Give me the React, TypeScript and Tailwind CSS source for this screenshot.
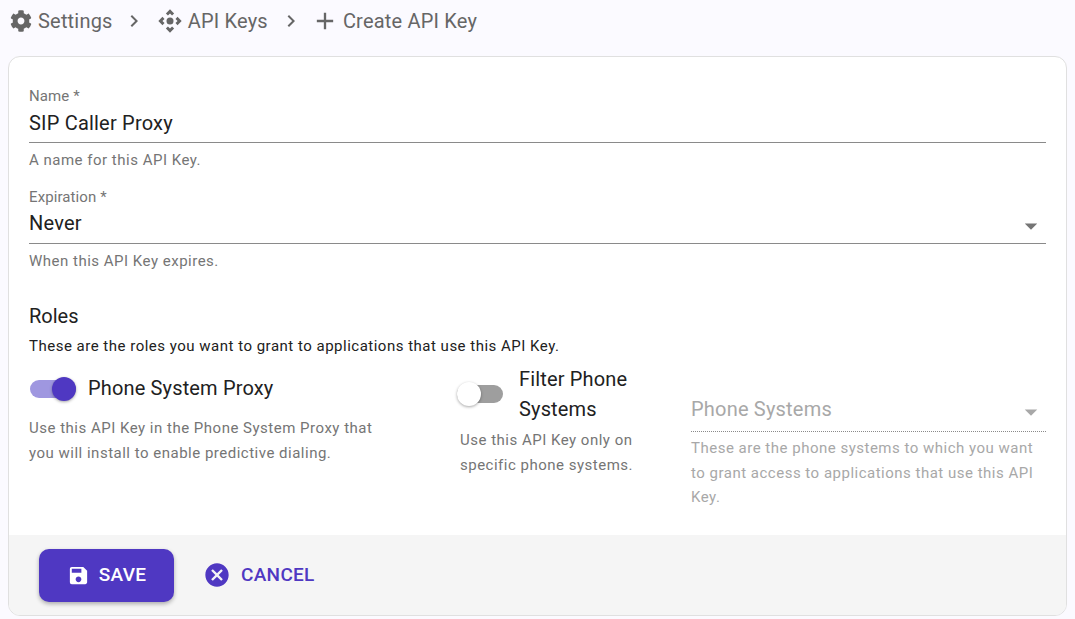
import { FaCog } from "react-icons/fa";
import { MdControlCamera, MdAdd, MdChevronRight, MdArrowDropDown, MdSave, MdCancel } from "react-icons/md";

const font = { fontFamily: "Roboto, sans-serif" };

function Crumb({ icon, label }: { icon: React.ReactNode; label: string }) {
  return (
    <div className="flex items-center gap-[4px] text-[20px] tracking-[0.2px] text-[#666666]">
      {icon}
      <span>{label}</span>
    </div>
  );
}

function Switch({ on }: { on: boolean }) {
  return (
    <div className="relative h-[18px] w-[46px] shrink-0">
      <div className={`h-[18px] w-[46px] rounded-full ${on ? "bg-[#9f97e0]" : "bg-[#9e9e9e]"}`} />
      <div
        className={`absolute top-[-3px] h-[24px] w-[24px] rounded-full shadow-[0_1px_3px_rgba(0,0,0,0.35)] ${
          on ? "right-0 bg-[#4f38c2]" : "left-0 bg-white"
        }`}
      />
    </div>
  );
}

export default function App() {
  return (
    <div className="h-[619px] w-[1075px] overflow-hidden bg-[#fbfaff]" style={font}>
      <div className="flex h-[42px] items-center pl-[10px]">
        <Crumb icon={<FaCog className="mr-[2px] h-[22px] w-[22px] text-[#666666]" />} label="Settings" />
        <MdChevronRight className="ml-[9px] mr-[10px] h-[24px] w-[24px] text-[#666666]" />
        <Crumb icon={<MdControlCamera className="h-[28px] w-[28px] text-[#666666]" />} label="API Keys" />
        <MdChevronRight className="ml-[11px] mr-[8px] h-[24px] w-[24px] text-[#666666]" />
        <Crumb icon={<MdAdd className="h-[28px] w-[28px] text-[#666666]" />} label="Create API Key" />
      </div>

      <div className="mx-[8px] mt-[14px] flex h-[560px] w-[1059px] flex-col overflow-hidden rounded-[12px] border border-[#e0e0e0] bg-white">
        <div className="flex-1 px-[20px] pt-[30px]">
          <div className="text-[15px] leading-[18px] tracking-[0.1px] text-[#757575]">Name *</div>
          <div className="flex h-[38px] items-center border-b border-[#8a8a8a] pb-[2px] text-[20px] tracking-[0.2px] text-[#212121]">
            SIP Caller Proxy
          </div>
          <div className="mt-[7px] text-[15px] leading-[20px] tracking-[0.5px] text-[#757575]">A name for this API Key.</div>

          <div className="mt-[18px] text-[15px] leading-[18px] tracking-[0.1px] text-[#757575]">Expiration *</div>
          <div className="flex h-[38px] items-center justify-between border-b border-[#8a8a8a] pb-[4px] text-[20px] tracking-[0.2px] text-[#212121]">
            <span>Never</span>
            <MdArrowDropDown className="mt-[7px] h-[30px] w-[30px] text-[#757575]" />
          </div>
          <div className="mt-[7px] text-[15px] leading-[20px] tracking-[0.5px] text-[#757575]">When this API Key expires.</div>

          <div className="mt-[31px] text-[20px] leading-[28px] text-[#212121]">Roles</div>
          <div className="mt-[6px] text-[15px] leading-[20px] tracking-[0.5px] text-[#212121]">
            These are the roles you want to grant to applications that use this API Key.
          </div>

          <div className="mt-[7px] flex">
            <div className="w-[428px] shrink-0">
              <div className="flex h-[50px] items-center gap-[12px]">
                <div className="mt-[2px] pl-px"><Switch on /></div>
                <span className="text-[20px] tracking-[0.15px] text-[#212121]">Phone System Proxy</span>
              </div>
              <div className="mt-[3px] w-[350px] text-[15px] leading-[25px] tracking-[0.5px] text-[#757575]">
                Use this API Key in the Phone System Proxy that you will install to enable predictive dialing.
              </div>
            </div>
            <div className="w-[234px] shrink-0">
              <div className="flex h-[60px] items-center gap-[15px] pt-[1px]">
                <div className="w-[47px] shrink-0"><Switch on={false} /></div>
                <span className="w-[120px] text-[20px] leading-[30px] tracking-[0.15px] text-[#212121]">Filter Phone Systems</span>
              </div>
              <div className="ml-[3px] mt-[5px] w-[190px] text-[15px] leading-[25px] tracking-[0.5px] text-[#757575]">
                Use this API Key only on specific phone systems.
              </div>
            </div>
            <div className="flex-1 pt-[27px]">
              <div className="flex h-[42px] items-center justify-between border-b border-dotted border-[#8a8a8a] pb-[4px] text-[20px] tracking-[0.2px] text-[#a8a8a8]">
                <span>Phone Systems</span>
                <MdArrowDropDown className="mt-[7px] h-[30px] w-[30px] text-[#a8a8a8]" />
              </div>
              <div className="mt-[4px] text-[15px] leading-[24.5px] tracking-[0.5px] text-[#a8a8a8]">
                These are the phone systems to which you want to grant access to applications that use this API Key.
              </div>
            </div>
          </div>
        </div>

        <div className="flex h-[80px] items-center gap-[29px] bg-[#f5f5f5] pl-[30px]">
          <button className="flex h-[53px] w-[135px] items-center justify-center gap-[9px] rounded-[10px] bg-[#4f38c2] text-[19px] font-medium tracking-[0.3px] text-white shadow-[0_2px_4px_rgba(0,0,0,0.3)]">
            <MdSave className="h-[23px] w-[23px]" />
            SAVE
          </button>
          <div className="flex items-center gap-[10px] text-[19px] font-medium tracking-[0.3px] text-[#4f38c2]">
            <MdCancel className="h-[28px] w-[28px]" />
            CANCEL
          </div>
        </div>
      </div>
    </div>
  );
}
